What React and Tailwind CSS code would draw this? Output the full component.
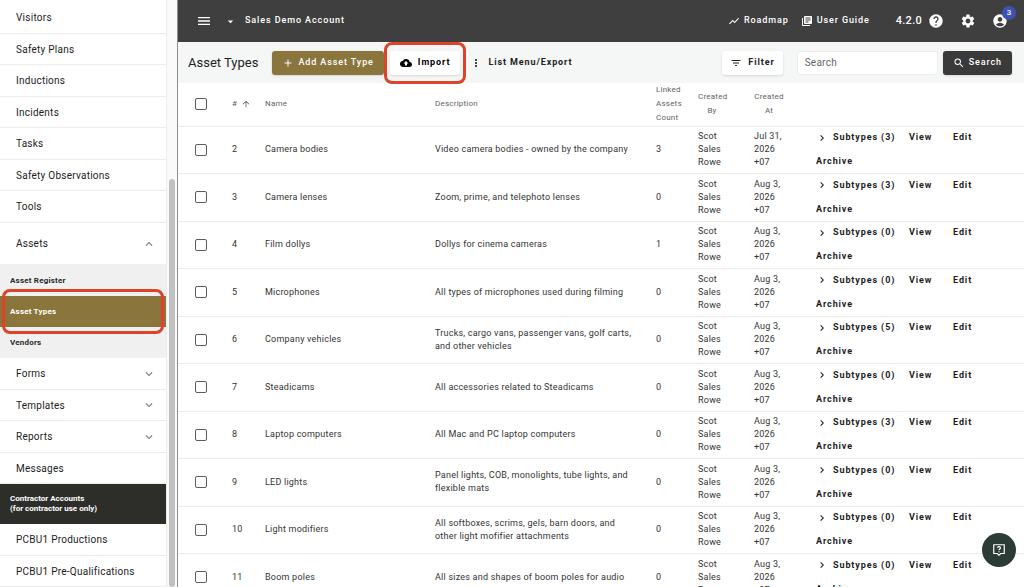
import {
  MdAccountCircle,
  MdAdd,
  MdArrowDropDown,
  MdArrowUpward,
  MdChevronRight,
  MdCloudUpload,
  MdExpandLess,
  MdExpandMore,
  MdFilterList,
  MdHelp,
  MdLibraryBooks,
  MdMenu,
  MdMoreVert,
  MdSearch,
  MdSettings,
  MdShowChart,
} from "react-icons/md";

const NAV_TOP = [
  "Visitors",
  "Safety Plans",
  "Inductions",
  "Incidents",
  "Tasks",
  "Safety Observations",
  "Tools",
];

const ASSET_LINKS = ["Asset Register", "Asset Types", "Vendors"];

const NAV_BOTTOM = [
  { label: "Forms", expandable: true },
  { label: "Templates", expandable: true },
  { label: "Reports", expandable: true },
  { label: "Messages" },
];

const CONTRACTOR_LINKS = ["PCBU1 Productions", "PCBU1 Pre-Qualifications"];

const ROWS = [
  { id: 2, name: "Camera bodies", description: "Video camera bodies - owned by the company", linked: 3, day: "Jul 31,", subtypes: 3 },
  { id: 3, name: "Camera lenses", description: "Zoom, prime, and telephoto lenses", linked: 0, day: "Aug 3,", subtypes: 3 },
  { id: 4, name: "Film dollys", description: "Dollys for cinema cameras", linked: 1, day: "Aug 3,", subtypes: 0 },
  { id: 5, name: "Microphones", description: "All types of microphones used during filming", linked: 0, day: "Aug 3,", subtypes: 0 },
  { id: 6, name: "Company vehicles", description: "Trucks, cargo vans, passenger vans, golf carts, and other vehicles", linked: 0, day: "Aug 3,", subtypes: 5 },
  { id: 7, name: "Steadicams", description: "All accessories related to Steadicams", linked: 0, day: "Aug 3,", subtypes: 0 },
  { id: 8, name: "Laptop computers", description: "All Mac and PC laptop computers", linked: 0, day: "Aug 3,", subtypes: 3 },
  { id: 9, name: "LED lights", description: "Panel lights, COB, monolights, tube lights, and flexible mats", linked: 0, day: "Aug 3,", subtypes: 0 },
  { id: 10, name: "Light modifiers", description: "All softboxes, scrims, gels, barn doors, and other light mofifier attachments", linked: 0, day: "Aug 3,", subtypes: 0 },
  { id: 11, name: "Boom poles", description: "All sizes and shapes of boom poles for audio", linked: 0, day: "Aug 3,", subtypes: 0 },
];

const NAV_ITEM_CLASS =
  "flex w-full items-center justify-between border-b border-[#ececec] pl-4 pr-2.5 text-left text-[10px] tracking-wide text-[#1c1c1c] odd:h-8 even:h-[31px]";

const CHECKBOX_CLASS =
  "block size-3 appearance-none rounded-[2px] border border-[#5c5c5c] bg-white checked:bg-[#8a753c]";

function Sidebar() {
  return (
    <aside className="flex w-[178px] shrink-0 overflow-hidden border-r border-[#8c8c8c] bg-[#fafafa]">
      <nav className="min-w-0 flex-1 border-r border-[#ececec] bg-white pt-0.5">
        <div>
          {NAV_TOP.map((label) => (
            <a key={label} href="#" className={NAV_ITEM_CLASS}>
              {label}
            </a>
          ))}
        </div>

        <button
          type="button"
          className="flex h-[41px] w-full items-center justify-between pl-4 pr-2.5 text-[10px] tracking-wide text-[#1c1c1c]"
        >
          Assets
          <MdExpandLess size={14} className="text-[#777]" />
        </button>
        <div className="bg-[#f0f0f0] pt-px">
          {ASSET_LINKS.map((label) =>
            label === "Asset Types" ? (
              <a
                key={label}
                href="#"
                aria-current="page"
                className="relative flex h-[31px] items-center bg-[#8a753c] pl-2.5 text-[8px] font-bold tracking-wide text-white"
              >
                {label}
                <span className="absolute -inset-y-[7px] left-0.5 right-0.5 rounded-lg border-3 border-[#dc4329]" />
              </a>
            ) : (
              <a
                key={label}
                href="#"
                className="flex h-[31px] items-center pl-2.5 text-[8px] font-bold tracking-wide text-[#2b2b2b]"
              >
                {label}
              </a>
            ),
          )}
        </div>

        <div>
          {NAV_BOTTOM.map(({ label, expandable }) =>
            expandable ? (
              <button key={label} type="button" className={NAV_ITEM_CLASS}>
                {label}
                <MdExpandMore size={14} className="text-[#777]" />
              </button>
            ) : (
              <a key={label} href="#" className={NAV_ITEM_CLASS}>
                {label}
              </a>
            ),
          )}
        </div>

        <div className="flex h-10 flex-col justify-center bg-[#2d2d2a] pl-2.5 text-[8px] leading-[10px] font-bold text-white">
          <span>Contractor Accounts</span>
          <span>(for contractor use only)</span>
        </div>
        <div>
          {CONTRACTOR_LINKS.map((label) => (
            <a key={label} href="#" className={NAV_ITEM_CLASS}>
              {label}
            </a>
          ))}
        </div>
      </nav>
      <div className="flex w-2.5 shrink-0 flex-col pt-[179px] pl-0.5">
        <div className="w-1.5 flex-1 rounded-full bg-[#c1c1c1]" />
      </div>
    </aside>
  );
}

function TopBar() {
  return (
    <header className="flex h-[42px] shrink-0 items-center bg-[#3f3f3f] pl-[18px] pr-4 text-[9px] font-medium tracking-widest text-white">
      <button type="button" aria-label="Toggle menu">
        <MdMenu size={16} />
      </button>
      <button type="button" className="ml-3 flex items-center gap-2">
        <MdArrowDropDown size={13} />
        Sales Demo Account
      </button>

      <div className="ml-auto flex items-center">
        <a href="#" className="flex items-center gap-1">
          <MdShowChart size={12} />
          Roadmap
        </a>
        <a href="#" className="ml-3 flex items-center gap-1">
          <MdLibraryBooks size={12} />
          User Guide
        </a>
        <span className="ml-[26px] text-[11px] tracking-wide">4.2.0</span>
        <button type="button" aria-label="Help" className="ml-1.5">
          <MdHelp size={16} />
        </button>
        <button type="button" aria-label="Settings" className="ml-4">
          <MdSettings size={16} />
        </button>
        <button type="button" aria-label="Account" className="relative ml-4">
          <MdAccountCircle size={16} />
          <span className="absolute -top-[7px] -right-2 flex size-3.5 items-center justify-center rounded-full bg-[#3f51b5] text-[8px] tracking-normal">
            3
          </span>
        </button>
      </div>
    </header>
  );
}

function Toolbar() {
  return (
    <div className="flex h-[41px] shrink-0 items-center bg-[#f5f7f6] pl-2.5 pr-3">
      <h1 className="text-[13px] text-[#222]">Asset Types</h1>
      <button
        type="button"
        className="ml-3.5 flex h-6 items-center gap-1 rounded-[3px] bg-[#8a753c] px-2.5 text-[9px] font-medium tracking-widest text-white shadow"
      >
        <MdAdd size={12} />
        Add Asset Type
      </button>
      <div className="relative ml-1.5">
        <button
          type="button"
          className="flex h-6 items-center gap-1.5 rounded-[3px] bg-white px-2.5 text-[9px] font-bold tracking-widest text-black shadow"
        >
          <MdCloudUpload size={12} />
          Import
        </button>
        <span className="pointer-events-none absolute -inset-x-1.5 -inset-y-[9px] rounded-lg border-3 border-[#dc4329]" />
      </div>
      <button
        type="button"
        className="ml-2.5 flex items-center gap-1.5 text-[9px] font-bold tracking-widest text-[#222]"
      >
        <MdMoreVert size={12} />
        List Menu/Export
      </button>

      <div className="ml-auto flex items-center">
        <button
          type="button"
          className="flex h-6 items-center gap-1.5 rounded-[3px] bg-white px-2 text-[9px] font-bold tracking-widest text-[#222] shadow"
        >
          <MdFilterList size={12} />
          Filter
        </button>
        <input
          type="search"
          aria-label="Search asset types"
          placeholder="Search"
          className="ml-3.5 h-6 w-[141px] rounded-[3px] border border-[#ececec] bg-white px-[7px] text-[10px] tracking-wide outline-none placeholder:text-[#666]"
        />
        <button
          type="button"
          className="ml-[5px] flex h-6 items-center gap-1 rounded-[3px] bg-[#3a3a3a] px-2.5 text-[9px] font-medium tracking-widest text-white shadow"
        >
          <MdSearch size={12} />
          Search
        </button>
      </div>
    </div>
  );
}

function AssetRow({ row }) {
  return (
    <tr className="border-b border-[#ececec] odd:h-[47px] even:h-12">
      <td className="pl-[17px]">
        <input type="checkbox" aria-label={`Select ${row.name}`} className={CHECKBOX_CLASS} />
      </td>
      <td>{row.id}</td>
      <td>{row.name}</td>
      <td className="pr-5">{row.description}</td>
      <td>{row.linked}</td>
      <td className="pr-5">Scot Sales Rowe</td>
      <td>
        {row.day}
        <br />
        2026
        <br />
        +07
      </td>
      <td className="text-[9px] font-bold tracking-widest text-[#1d1d1d]">
        <div className="flex items-center">
          <button type="button" className="flex w-[93px] items-center gap-[5px]">
            <MdChevronRight size={12} />
            Subtypes ({row.subtypes})
          </button>
          <a href="#" className="w-11">
            View
          </a>
          <a href="#">Edit</a>
        </div>
        <button type="button" className="mt-[11px] block">
          Archive
        </button>
      </td>
    </tr>
  );
}

function AssetTable() {
  return (
    <table className="w-full table-fixed border-collapse text-left text-[9px] leading-[13px] tracking-wide text-[#333]">
      <colgroup>
        <col className="w-[54px]" />
        <col className="w-[33px]" />
        <col className="w-[170px]" />
        <col className="w-[221px]" />
        <col className="w-[42px]" />
        <col className="w-[56px]" />
        <col className="w-[62px]" />
        <col />
      </colgroup>
      <thead className="text-[8px] leading-[14px] text-[#5f5f5f]">
        <tr className="h-[43px] border-b border-[#ececec]">
          <th className="pl-[17px]">
            <input type="checkbox" aria-label="Select all" className={CHECKBOX_CLASS} />
          </th>
          <th className="font-normal">
            <span className="flex items-center gap-1">
              # <MdArrowUpward size={10} />
            </span>
          </th>
          <th className="font-normal">Name</th>
          <th className="font-normal">Description</th>
          <th className="font-normal">Linked Assets Count</th>
          <th className="pr-7 text-center font-normal">Created By</th>
          <th className="pr-8 text-center font-normal">Created At</th>
          <th aria-label="Actions" />
        </tr>
      </thead>
      <tbody>
        {ROWS.map((row) => (
          <AssetRow key={row.id} row={row} />
        ))}
      </tbody>
    </table>
  );
}

export default function App() {
  return (
    <div className="flex h-screen overflow-hidden bg-white font-[Roboto,sans-serif]">
      <Sidebar />
      <main className="flex min-w-0 flex-1 flex-col overflow-hidden">
        <TopBar />
        <Toolbar />
        <AssetTable />
      </main>

      <button
        type="button"
        aria-label="Open help chat"
        className="fixed right-2 bottom-5 flex size-[34px] items-center justify-center rounded-full bg-[#2b3b36] text-white"
      >
        <svg viewBox="0 0 24 24" className="size-3.5" fill="none" stroke="currentColor" strokeWidth="2">
          <path d="M3 3h18v15h-6l-3 3-3-3H3z" />
          <path d="M9.5 8.5c0-3 5-3 5 0 0 2-2.5 1.8-2.5 4M12 14v1.8" />
        </svg>
      </button>
    </div>
  );
}
